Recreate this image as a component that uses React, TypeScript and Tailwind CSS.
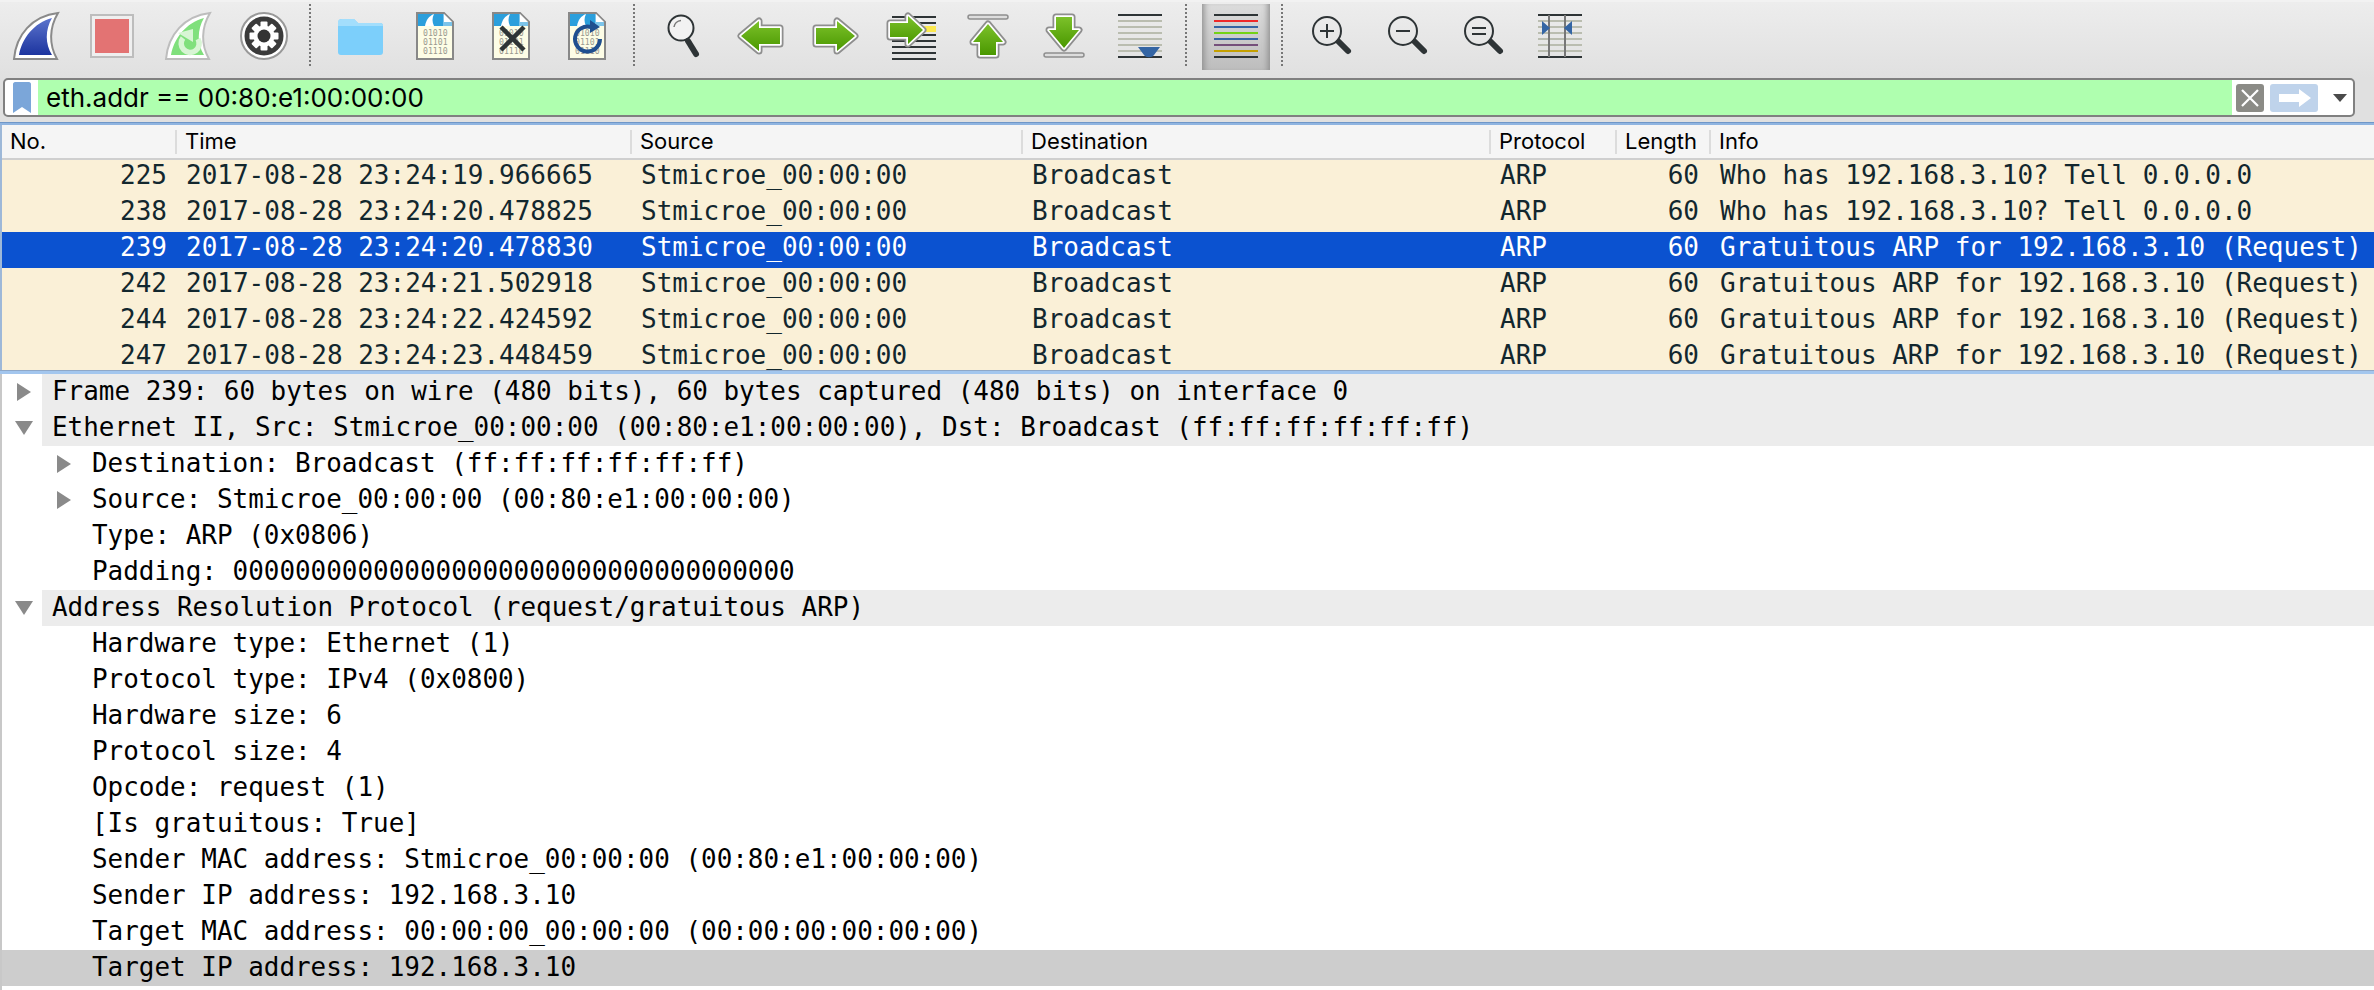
import type { ReactNode } from "react";

const mono = "font-['DejaVu_Sans_Mono',monospace]";
const ink = "#2e3436";

const packets = [
    { no: "225", time: "2017-08-28 23:24:19.966665", info: "Who has 192.168.3.10? Tell 0.0.0.0" },
    { no: "238", time: "2017-08-28 23:24:20.478825", info: "Who has 192.168.3.10? Tell 0.0.0.0" },
    { no: "239", time: "2017-08-28 23:24:20.478830", info: "Gratuitous ARP for 192.168.3.10 (Request)", selected: true },
    { no: "242", time: "2017-08-28 23:24:21.502918", info: "Gratuitous ARP for 192.168.3.10 (Request)" },
    { no: "244", time: "2017-08-28 23:24:22.424592", info: "Gratuitous ARP for 192.168.3.10 (Request)" },
    { no: "247", time: "2017-08-28 23:24:23.448459", info: "Gratuitous ARP for 192.168.3.10 (Request)" },
];

type TreeRow = { text: string; level: 0 | 1; arrow?: "right" | "down"; selected?: boolean };

const tree: TreeRow[] = [
    { text: "Frame 239: 60 bytes on wire (480 bits), 60 bytes captured (480 bits) on interface 0", level: 0, arrow: "right" },
    { text: "Ethernet II, Src: Stmicroe_00:00:00 (00:80:e1:00:00:00), Dst: Broadcast (ff:ff:ff:ff:ff:ff)", level: 0, arrow: "down" },
    { text: "Destination: Broadcast (ff:ff:ff:ff:ff:ff)", level: 1, arrow: "right" },
    { text: "Source: Stmicroe_00:00:00 (00:80:e1:00:00:00)", level: 1, arrow: "right" },
    { text: "Type: ARP (0x0806)", level: 1 },
    { text: "Padding: 000000000000000000000000000000000000", level: 1 },
    { text: "Address Resolution Protocol (request/gratuitous ARP)", level: 0, arrow: "down" },
    { text: "Hardware type: Ethernet (1)", level: 1 },
    { text: "Protocol type: IPv4 (0x0800)", level: 1 },
    { text: "Hardware size: 6", level: 1 },
    { text: "Protocol size: 4", level: 1 },
    { text: "Opcode: request (1)", level: 1 },
    { text: "[Is gratuitous: True]", level: 1 },
    { text: "Sender MAC address: Stmicroe_00:00:00 (00:80:e1:00:00:00)", level: 1 },
    { text: "Sender IP address: 192.168.3.10", level: 1 },
    { text: "Target MAC address: 00:00:00_00:00:00 (00:00:00:00:00:00)", level: 1 },
    { text: "Target IP address: 192.168.3.10", level: 1, selected: true },
];

const columns = ["No.", "Time", "Source", "Destination", "Protocol", "Length", "Info"];
const gridCols = "grid-cols-[174px_455px_391px_468px_126px_94px_1fr]";
const headerCols = "grid-cols-[173px_455px_391px_468px_126px_94px_1fr]";

function Icon({ children }: { children: ReactNode }) {
    return (
        <svg className="h-[72px] w-[76px] shrink-0" viewBox="0 0 76 72">
            {children}
        </svg>
    );
}

function Separator() {
    return (
        <div className="w-5 shrink-0 pl-[7px] pt-1">
            <div className="h-[62px] w-0.5 border-l-2 border-dotted border-[#777]" />
        </div>
    );
}

const sharkOuter = "M16 59C18 35 34 16 60 13C51 28 51 45 59 59Z";
const sharkInner = "M21 55C24 38 36 23 54 18C47 30 47 44 54 55Z";

function Gear() {
    return (
        <Icon>
            <circle cx="38" cy="36" r="23" fill="#fff" stroke="#999" strokeWidth="2" />
            <circle cx="38" cy="36" r="19.5" fill="#3b3b3b" />
            {[0, 45, 90, 135].map((a) => (
                <rect key={a} x="34.5" y="21.5" width="7" height="29" fill="#fff" rx="1" transform={`rotate(${a} 38 36)`} />
            ))}
            <circle cx="38" cy="36" r="10.5" fill="#fff" />
            <circle cx="38" cy="36" r="6.5" fill="#333" />
        </Icon>
    );
}

function DocBase({ children }: { children?: ReactNode }) {
    return (
        <>
            <path d="M19 13H46L55 22V59H19Z" fill="#fdfde6" stroke="#888" strokeWidth="2" />
            <path d="M20 14H45V26H20Z" fill="#2b9fdc" />
            <path d="M46 14L54 22H46Z" fill="#fff" />
            <path d="M45 14H46V22H54V26H45Z" fill="#7cc4ea" />
            <path d="M27 26C28 20 31 16 36 14C34 18 34 22 36 26Z" fill="#fff" />
            {["01010", "01101", "01110"].map((t, i) => (
                <text key={t} x="25" y={36 + i * 9} fontSize="8.2" fill="#9a9a90" fontFamily="DejaVu Sans Mono">
                    {t}
                </text>
            ))}
            {children}
        </>
    );
}

function Arrow({ points, gid }: { points: string; gid: string }) {
    return (
        <>
            <polygon points={points} fill="none" stroke="#8e8e8e" strokeWidth="7" strokeLinejoin="round" />
            <polygon points={points} fill="none" stroke="#fff" strokeWidth="3.5" strokeLinejoin="round" />
            <polygon points={points} fill={`url(#${gid})`} />
        </>
    );
}

function Lines({ x1, x2, ys, color }: { x1: number; x2: number; ys: number[]; color: string }) {
    return (
        <>
            {ys.map((y) => (
                <rect key={y} x={x1} y={y - 1} width={x2 - x1} height="2" fill={color} />
            ))}
        </>
    );
}

function Zoom({ children }: { children?: ReactNode }) {
    return (
        <Icon>
            <circle cx="33" cy="31" r="14" fill="none" stroke={ink} strokeWidth="2" />
            <line x1="45" y1="42" x2="54" y2="51" stroke={ink} strokeWidth="6" strokeLinecap="round" />
            <g stroke={ink} strokeWidth="2">{children}</g>
        </Icon>
    );
}

function Toolbar() {
    return (
        <div className="flex h-[78px] items-start border-t-2 border-[#f2f2f2] bg-linear-to-b from-[#ededed] to-[#e0e0e0]">
            <div className="-ml-0.5 -mt-0.5 flex items-start">
                <svg width="0" height="0" className="absolute">
                    <defs>
                        <linearGradient id="blue" x1="0" y1="0" x2="0" y2="1">
                            <stop offset="0" stopColor="#5c74cd" />
                            <stop offset="1" stopColor="#1c349f" />
                        </linearGradient>
                        <linearGradient id="green" x1="0" y1="0" x2="0" y2="1">
                            <stop offset="0" stopColor="#7cc12a" />
                            <stop offset="1" stopColor="#4a9800" />
                        </linearGradient>
                    </defs>
                </svg>

                {/* Capture */}
                <Icon>
                    <path d={sharkOuter} fill="#fff" stroke="#8a8a8a" strokeWidth="2" />
                    <path d={sharkInner} fill="url(#blue)" />
                </Icon>
                <Icon>
                    <rect x="17" y="15" width="42" height="42" fill="#efefef" stroke="#bdbdbd" strokeWidth="2" />
                    <rect x="21" y="19" width="34" height="34" fill="#e37373" />
                </Icon>
                <Icon>
                    <path d={sharkOuter} fill="#fff" stroke="#bdbdbd" strokeWidth="2" />
                    <path d={sharkInner} fill="#80e07c" />
                    <path d="M33 38A9 9 0 1 0 48 39" fill="none" stroke="#d8f5d4" strokeWidth="5.5" />
                    <path d="M28 33L43 29L43 42Z" fill="#d8f5d4" />
                </Icon>
                <Gear />
                <Separator />

                {/* Files */}
                <Icon>
                    <path d="M16 24C16 21 17 19 20 19H32L36 23H58C60 23 61 24 61 26V52C61 54 60 55 58 55H19C17 55 16 54 16 52Z" fill="#7ccffb" />
                    <path d="M16 26V22C16 20 17 19 20 19H32L36 23H58C60 23 61 24 61 26Z" fill="#a3defc" />
                </Icon>
                <Icon>
                    <DocBase />
                </Icon>
                <Icon>
                    <DocBase>
                        <path d="M27 27L50 50M50 27L27 50" stroke={ink} strokeWidth="4.5" />
                    </DocBase>
                </Icon>
                <Icon>
                    <DocBase>
                        <path d="M41 27A12.5 12.5 0 1 0 50 39" fill="none" stroke="#1f4f8f" strokeWidth="4" />
                        <path d="M40 20L50 27L40 33Z" fill="#1f4f8f" />
                    </DocBase>
                </Icon>
                <Separator />

                {/* Navigation */}
                <Icon>
                    <circle cx="35" cy="28" r="12.5" fill="#f2f2f2" stroke={ink} strokeWidth="2" />
                    <path d="M28 27A7.5 7.5 0 0 1 35 20.5" fill="none" stroke="#777" strokeWidth="1.5" />
                    <line x1="42" y1="41" x2="50" y2="54" stroke={ink} strokeWidth="6" strokeLinecap="round" />
                </Icon>
                <Icon>
                    <Arrow gid="green" points="19,36 37,21 37,28 58,28 58,44 37,44 37,51" />
                </Icon>
                <Icon>
                    <Arrow gid="green" points="57,36 39,21 39,28 18,28 18,44 39,44 39,51" />
                </Icon>
                <Icon>
                    <Lines x1={18} x2={62} ys={[17, 23, 35, 41, 47, 53, 59]} color={ink} />
                    <rect x="44" y="26" width="18" height="6" fill="#fce94f" />
                    <Arrow gid="green" points="49,30 34,16 34,23 16,23 16,37 34,37 34,44" />
                </Icon>
                <Icon>
                    <rect x="18" y="15" width="40" height="4" rx="2" fill="#ddd" stroke="#8e8e8e" strokeWidth="1.5" />
                    <Arrow gid="green" points="38,24 53,42 46,42 46,55 30,55 30,42 23,42" />
                </Icon>
                <Icon>
                    <rect x="18" y="53" width="40" height="4" rx="2" fill="#ddd" stroke="#8e8e8e" strokeWidth="1.5" />
                    <Arrow gid="green" points="38,48 53,30 46,30 46,17 30,17 30,30 23,30" />
                </Icon>
                <Icon>
                    <Lines x1={16} x2={60} ys={[21, 27, 33, 39, 45, 51]} color="#babdb0" />
                    <Lines x1={16} x2={60} ys={[15, 57]} color={ink} />
                    <path d="M36 47H58L52 55C50 58 44 58 42 55Z" fill="#3465a4" />
                </Icon>
                <Separator />

                {/* Colorize, shown pressed */}
                <div className="relative h-[72px] w-[76px] shrink-0">
                    <div className="absolute left-1 top-1 h-[66px] w-[68px] bg-linear-to-b from-[#dcdcdc] to-[#bdbdbd] shadow-[inset_7px_0_6px_-5px_#8c8c8c,inset_-7px_0_6px_-5px_#8c8c8c]" />
                    <svg className="absolute inset-0" viewBox="0 0 76 72">
                        <Lines x1={16} x2={60} ys={[15, 57]} color={ink} />
                        <Lines x1={16} x2={60} ys={[21]} color="#ef2929" />
                        <Lines x1={16} x2={60} ys={[27, 39]} color="#3465a4" />
                        <Lines x1={16} x2={60} ys={[33]} color="#73d216" />
                        <Lines x1={16} x2={60} ys={[45]} color="#75507b" />
                        <Lines x1={16} x2={60} ys={[51]} color="#c4a000" />
                    </svg>
                </div>
                <Separator />

                {/* Zoom */}
                <Zoom>
                    <path d="M26 31H40M33 24V38" fill="none" />
                </Zoom>
                <Zoom>
                    <path d="M26 31H40" fill="none" />
                </Zoom>
                <Zoom>
                    <path d="M26 28H40M26 34H40" fill="none" />
                </Zoom>
                <Icon>
                    <Lines x1={16} x2={60} ys={[21, 27, 33, 39, 45, 51]} color="#babdb0" />
                    <Lines x1={16} x2={60} ys={[15, 57]} color={ink} />
                    <rect x="26" y="15" width="2" height="42" fill="#777" />
                    <rect x="42" y="15" width="2" height="42" fill="#777" />
                    <path d="M20 21L28 28L20 35Z" fill="#3465a4" />
                    <path d="M50 21L42 28L50 35Z" fill="#3465a4" />
                </Icon>
            </div>
        </div>
    );
}

function FilterBar() {
    return (
        <div className="h-[44px] bg-[#e0e0e0] pl-[3px] pr-[19px]">
            <div className="flex h-[39px] items-stretch overflow-hidden rounded-[5px] border-2 border-[#808080] bg-white">
                <div className="flex w-[33px] shrink-0 items-center pl-2">
                    <svg width="18" height="31" viewBox="0 0 18 31">
                        <path d="M2 0H16C17 0 18 1 18 2V31L9 25L0 31V2C0 1 1 0 2 0Z" fill="#7ba6d9" />
                    </svg>
                </div>
                <div className="flex min-w-0 flex-1 items-center bg-[#afffaf] pl-2 font-['Inter',sans-serif] text-[26px] text-black">
                    eth.addr == 00:80:e1:00:00:00
                </div>
                <div className="flex w-[121px] shrink-0 items-center pl-1">
                    <div className="flex h-7 w-7 items-center justify-center rounded-[3px] bg-[#8b8b86]">
                        <svg width="20" height="20" viewBox="0 0 20 20">
                            <path d="M2 2L18 18M18 2L2 18" stroke="#fff" strokeWidth="2.2" />
                        </svg>
                    </div>
                    <div className="ml-1.5 flex h-7 w-12 items-center justify-center rounded-[3px] bg-[#bfd3eb]">
                        <svg width="33" height="18" viewBox="0 0 33 18">
                            <path d="M1 5H21V0L33 9L21 18V13H1Z" fill="#fff" />
                        </svg>
                    </div>
                    <svg className="ml-[15px]" width="14" height="8" viewBox="0 0 14 8">
                        <path d="M0 0H14L7 8Z" fill="#4a4a4a" />
                    </svg>
                </div>
            </div>
        </div>
    );
}

function PacketList() {
    return (
        <div className="border-l-2 border-[#9db8d8]">
            <div className={`grid h-[35px] ${headerCols} items-center border-b-2 border-[#cfcfcf] bg-[#f5f5f5] font-['Inter',sans-serif] text-[22px] text-black`}>
                {columns.map((c, i) => (
                    <div key={c} className={`flex h-6 items-center pl-2 ${i > 0 ? "border-l-2 border-[#dcdcdc]" : ""}`}>
                        {c}
                    </div>
                ))}
            </div>
            <div className={`h-[210px] overflow-hidden ${mono} text-[26px]`}>
                {packets.map((p) => (
                    <div
                        key={p.no}
                        className={`grid h-9 ${gridCols} leading-[30px] whitespace-nowrap ${p.selected ? "bg-[#0b52d0] text-white" : "bg-[#faf0d7] text-[#12272e]"}`}
                    >
                        <div className="pr-[9px] text-right">{p.no}</div>
                        <div className="pl-[10px]">{p.time}</div>
                        <div className="pl-[10px]">Stmicroe_00:00:00</div>
                        <div className="pl-[10px]">Broadcast</div>
                        <div className="pl-[10px]">ARP</div>
                        <div className="pr-[11px] text-right">60</div>
                        <div className="overflow-hidden pl-[10px]">{p.info}</div>
                    </div>
                ))}
            </div>
        </div>
    );
}

function Caret({ dir }: { dir: "right" | "down" }) {
    return dir === "right" ? (
        <svg width="14" height="18" viewBox="0 0 14 18">
            <path d="M0 0L14 9L0 18Z" fill="#8a8a8a" />
        </svg>
    ) : (
        <svg width="18" height="14" viewBox="0 0 18 14">
            <path d="M0 0H18L9 14Z" fill="#8a8a8a" />
        </svg>
    );
}

function Details() {
    return (
        <div className={`flex-1 border-l-2 border-[#c8c8c8] bg-white ${mono} text-[25.95px] text-black`}>
            {tree.map((r) => (
                <div key={r.text} className={`relative h-9 whitespace-nowrap leading-[34px] ${r.selected ? "bg-[#cdcdcd]" : ""}`}>
                    {r.arrow && (
                        <div className={`absolute top-0 flex h-9 w-[18px] items-center justify-center ${r.level === 0 ? "left-[13px]" : "left-[53px]"}`}>
                            <Caret dir={r.arrow} />
                        </div>
                    )}
                    {r.level === 0 ? (
                        <div className="ml-10 h-9 bg-[#ececec] pl-[10px]">{r.text}</div>
                    ) : (
                        <div className="pl-[90px]">{r.text}</div>
                    )}
                </div>
            ))}
        </div>
    );
}

export default function App() {
    return (
        <div className="flex h-[990px] w-[2374px] flex-col overflow-hidden bg-white">
            <Toolbar />
            <FilterBar />
            <div className="h-[3px] border-t border-[#6f97c8] bg-[#8fb4e0]" />
            <PacketList />
            <div className="h-1 border-t border-[#8fa8c8] bg-[#a3c6ee]" />
            <Details />
        </div>
    );
}
